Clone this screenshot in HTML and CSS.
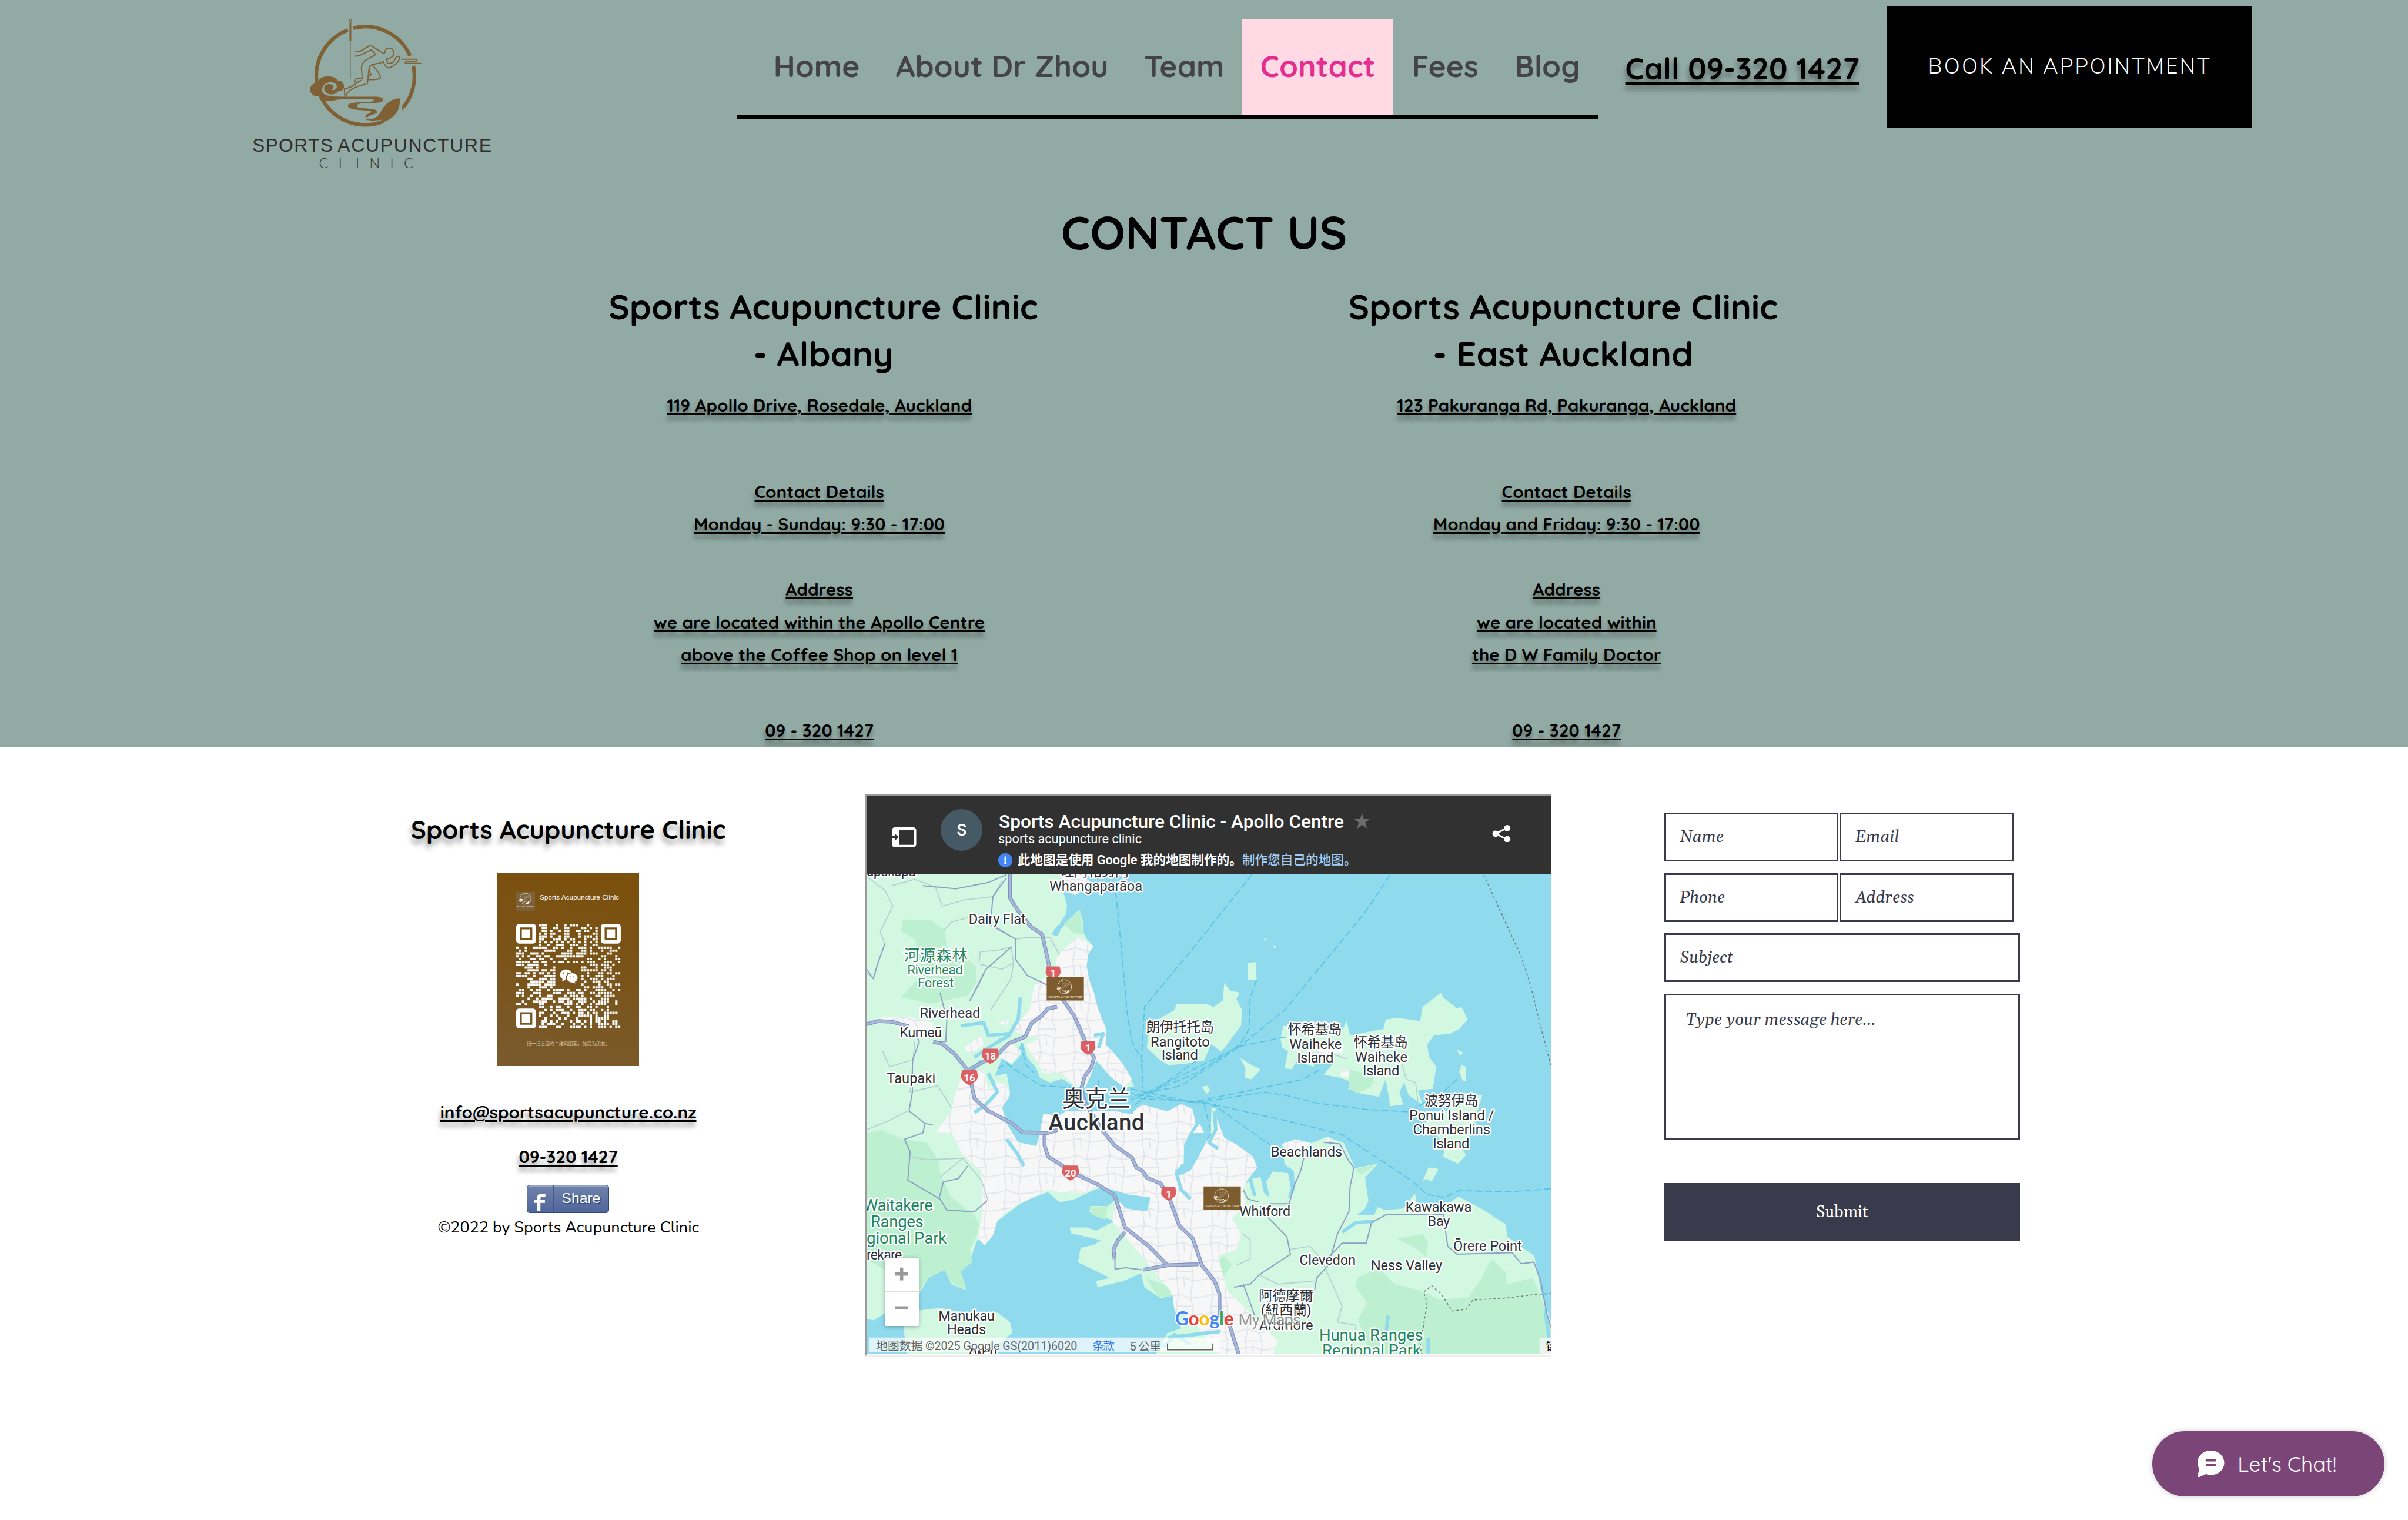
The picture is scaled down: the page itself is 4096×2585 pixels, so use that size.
FILE: index.html
```html
<!DOCTYPE html>
<html lang="en">
<head>
<meta charset="utf-8">
<title>Contact | Sports Acupuncture Clinic</title>
<link rel="stylesheet" href="styles.css">
</head>
<body>
<svg class="defs" width="0" height="0" aria-hidden="true">
  <symbol id="emblem" viewBox="400 90 580 570">
    <g fill="none" stroke="currentColor" stroke-width="19">
      <path d="M625 145A253 253 0 0 1 918 288M935 340A253 253 0 0 1 884 553M780 627A253 253 0 0 1 434 391A253 253 0 0 1 597 155"/>
    </g>
    <path fill="currentColor" d="M880 540L894 546L874 575ZM866 508C805 510 780 555 762 585C748 610 720 618 686 616C715 626 750 622 775 618L745 640C840 622 868 570 866 508Z"/>
    <path fill="currentColor" d="M448 494C425 503 402 485 402 462C402 440 420 428 440 428C450 400 475 393 497 394C520 394 540 405 546 417C565 415 577 430 577 446C577 462 565 473 546 471C538 484 520 489 508 487C485 485 474 468 474 455C476 435 500 430 515 438C528 446 525 462 511 464C530 468 541 456 540 443C535 424 505 420 485 430C465 440 460 462 467 478C478 496 520 499 560 499H720C745 499 778 498 780 515C780 534 730 531 665 534C640 537 637 550 655 556C700 562 745 560 750 576C748 592 705 592 695 609C684 606 688 592 700 588C722 580 725 575 700 571C650 566 600 566 597 546C598 528 650 527 700 527C735 526 740 514 720 513H560C535 514 525 522 497 522C470 522 458 505 448 494Z"/>
    <g fill="none" stroke="currentColor" stroke-width="6" stroke-linecap="round" stroke-linejoin="round">
      <circle cx="610" cy="103" r="5" stroke-width="3"/>
      <path stroke-width="9" stroke-linecap="butt" d="M610 110V212"/>
      <path stroke-width="3" d="M610 212V405"/>
      <path d="M638 265C670 274 690 236 718 236L785 278C788 256 800 246 812 248C835 250 838 275 829 290C822 300 815 294 806 306L795 301"/>
      <path d="M635 290C665 292 695 262 720 258L741 281C712 302 670 308 667 350L671 406L640 407L631 424"/>
      <path d="M664 415C635 428 620 455 579 457L581 497M590 492C595 462 640 448 686 435"/>
      <path d="M697 434C706 400 698 370 712 340C730 325 760 332 780 318C790 345 805 355 815 348C845 338 868 310 863 293C850 285 843 298 838 310C830 330 815 325 802 328L797 303"/>
      <path d="M725 338C745 358 765 380 765 402C755 412 735 412 710 411M708 350C705 370 712 376 718 385L710 390"/>
      <path stroke-linecap="butt" d="M873 306H952Q960 318 945 318H897Q887 327 900 327H976"/>
    </g>
  </symbol>
  <symbol id="shield" viewBox="0 0 30 29"><path fill="#dc5f62" d="M2 1H28Q30 8 30 14Q28 21 15 28Q2 21 0 14Q0 8 2 1Z"/></symbol>
</svg>

<div class="page">
  <section class="hero">
    <header class="header">
      <svg class="logo" viewBox="0 0 1500 960">
        <svg x="400" y="90" width="580" height="570" color="#7f6135"><use href="#emblem"/></svg>
        <text class="logo-name" x="103" y="783" textLength="416">SPORTS</text>
        <text class="logo-name" x="544" y="783" textLength="795">ACUPUNCTURE</text>
        <text class="logo-sub" x="448" y="868" textLength="486">CLINIC</text>
      </svg>
      <nav class="nav">
        <a class="nav-item home">Home</a>
        <a class="nav-item about">About Dr Zhou</a>
        <a class="nav-item team">Team</a>
        <a class="nav-item contact">Contact</a>
        <a class="nav-item fees">Fees</a>
        <a class="nav-item blog">Blog</a>
      </nav>
      <a class="call">Call 09-320 1427</a>
      <a class="book">BOOK AN APPOINTMENT</a>
    </header>
    <h1 class="title">CONTACT US</h1>
    <div class="clinics">
      <div class="clinic albany">
        <h2>Sports Acupuncture Clinic<br>- Albany</h2>
        <p class="addr">119 Apollo Drive, Rosedale, Auckland</p>
        <p>Contact Details</p>
        <p>Monday - Sunday: 9:30 - 17:00</p>
        <p class="where">Address</p>
        <p>we are located within the Apollo Centre</p>
        <p>above the Coffee Shop on level 1</p>
        <p class="phone">09 - 320 1427</p>
      </div>
      <div class="clinic east">
        <h2>Sports Acupuncture Clinic<br>- East Auckland</h2>
        <p class="addr">123 Pakuranga Rd, Pakuranga, Auckland</p>
        <p>Contact Details</p>
        <p>Monday and Friday: 9:30 - 17:00</p>
        <p class="where">Address</p>
        <p>we are located within</p>
        <p>the D W Family Doctor</p>
        <p class="phone">09 - 320 1427</p>
      </div>
    </div>
  </section>

  <section class="lower">
    <div class="about-col">
      <h3>Sports Acupuncture Clinic</h3>
      <div class="qr-card">
        <div class="qr-head">
          <div class="qr-logo"><svg viewBox="400 90 580 570"><use href="#emblem" x="400" y="90" width="580" height="570"/></svg><small>ORTS ACUPUNCT</small></div>
          <span>Sports Acupuncture Clinic</span>
        </div>
        <svg class="qr" viewBox="0 0 37 37">
          <g fill="none" stroke="#fff" stroke-width="1.3">
            <rect x=".65" y=".65" width="5.7" height="5.7" rx=".4"/><rect x="30.65" y=".65" width="5.7" height="5.7" rx=".4"/><rect x=".65" y="30.65" width="5.7" height="5.7" rx=".4"/>
          </g>
          <path fill="#fff" d="M2 2h3v3h-3zM32 2h3v3h-3zM2 32h3v3h-3z"/>
          <path fill="none" stroke="#fff" stroke-width=".84" stroke-dasharray=".84 .16" d="M8 .5h3M14 .5h1M17 .5h1M19 .5h3M25 .5h1
M9 1.5h2M13 1.5h2M17 1.5h2M23 1.5h2M26 1.5h1M28 1.5h1
M9 2.5h2M12 2.5h1M15 2.5h1M17 2.5h2M21 2.5h2M24 2.5h2M28 2.5h1
M8 3.5h1M10 3.5h1M12 3.5h2M17 3.5h2M22 3.5h1M27 3.5h2
M8 4.5h3M12 4.5h1M15 4.5h1M17 4.5h2M22 4.5h1M24 4.5h3M28 4.5h1
M8 5.5h2M13 5.5h3M17 5.5h1M19 5.5h2M24 5.5h1M27 5.5h2
M8 6.5h1M10 6.5h1M12 6.5h1M14 6.5h1M16 6.5h1M18 6.5h1M20 6.5h1M22 6.5h1M24 6.5h1M26 6.5h1M28 6.5h1
M8 7.5h1M11 7.5h1M14 7.5h3M19 7.5h3M24 7.5h1M27 7.5h2
M0 8.5h1M3 8.5h1M6 8.5h5M13 8.5h2M16 8.5h1M19 8.5h1M22 8.5h3M26 8.5h1M29 8.5h5M36 8.5h1
M1 9.5h1M3 9.5h1M10 9.5h4M18 9.5h2M23 9.5h2M26 9.5h1M30 9.5h1M33 9.5h3
M0 10.5h3M5 10.5h3M9 10.5h1M16 10.5h4M21 10.5h4M26 10.5h3M32 10.5h2
M0 11.5h1M2 11.5h1M4 11.5h1M7 11.5h2M10 11.5h2M14 11.5h10M30 11.5h2M35 11.5h1
M1 12.5h1M5 12.5h2M8 12.5h2M12 12.5h1M17 12.5h1M25 12.5h2M29 12.5h1M31 12.5h1M35 12.5h2
M0 13.5h5M6 13.5h2M9 13.5h2M13 13.5h1M15 13.5h2M18 13.5h1M20 13.5h2M23 13.5h1M25 13.5h3M31 13.5h3M36 13.5h1
M0 14.5h3M4 14.5h4M10 14.5h1M26 14.5h3M30 14.5h3M34 14.5h1
M3 15.5h3M7 15.5h1M13 15.5h1M23 15.5h2M28 15.5h1M31 15.5h3
M4 16.5h4M9 16.5h2M12 16.5h2M23 16.5h6M30 16.5h2M33 16.5h1
M0 17.5h2M3 17.5h2M6 17.5h1M8 17.5h2M11 17.5h1M13 17.5h1M25 17.5h1M29 17.5h2M32 17.5h2M35 17.5h2
M0 18.5h4M6 18.5h1M10 18.5h4M23 18.5h1M25 18.5h1M28 18.5h3M34 18.5h1
M4 19.5h2M8 19.5h3M12 19.5h2M23 19.5h1M26 19.5h3M30 19.5h1M32 19.5h3
M5 20.5h5M11 20.5h3M24 20.5h1M27 20.5h3M31 20.5h2
M0 21.5h1M4 21.5h5M10 21.5h4M23 21.5h1M29 21.5h1M32 21.5h2M35 21.5h2
M4 22.5h1M8 22.5h3M12 22.5h1M24 22.5h2M27 22.5h4M33 22.5h1
M1 23.5h2M5 23.5h1M7 23.5h2M11 23.5h1M13 23.5h4M18 23.5h1M21 23.5h2M24 23.5h1M28 23.5h4M34 23.5h1M36 23.5h1
M0 24.5h3M6 24.5h3M13 24.5h3M18 24.5h3M22 24.5h2M26 24.5h2M29 24.5h5
M0 25.5h1M2 25.5h1M5 25.5h1M8 25.5h1M11 25.5h2M17 25.5h1M19 25.5h3M23 25.5h1M28 25.5h2M31 25.5h4
M4 26.5h1M7 26.5h1M9 26.5h4M15 26.5h4M20 26.5h5M26 26.5h1M30 26.5h3
M2 27.5h1M6 27.5h5M13 27.5h1M15 27.5h2M18 27.5h2M22 27.5h3M27 27.5h1M29 27.5h4M35 27.5h1
M0 28.5h2M3 28.5h1M8 28.5h2M17 28.5h3M21 28.5h1M23 28.5h1M26 28.5h1M28 28.5h4M35 28.5h1
M8 29.5h2M12 29.5h1M14 29.5h2M18 29.5h1M21 29.5h2M25 29.5h2M28 29.5h1M32 29.5h1
M10 30.5h1M12 30.5h1M14 30.5h3M19 30.5h1M22 30.5h3M26 30.5h2M30 30.5h1M32 30.5h1
M8 31.5h2M13 31.5h1M16 31.5h3M20 31.5h1M22 31.5h2M25 31.5h1M27 31.5h2M31 31.5h5
M8 32.5h1M12 32.5h1M14 32.5h1M18 32.5h1M22 32.5h5M28 32.5h1M31 32.5h2
M10 33.5h1M15 33.5h1M17 33.5h1M21 33.5h1M26 33.5h1M28 33.5h5
M9 34.5h2M12 34.5h1M14 34.5h1M19 34.5h1M21 34.5h2M24 34.5h1M26 34.5h1M28 34.5h2M31 34.5h1M34 34.5h2
M9 35.5h1M11 35.5h3M16 35.5h1M20 35.5h1M23 35.5h1M26 35.5h1M29 35.5h4M34 35.5h2
M8 36.5h3M14 36.5h2M19 36.5h4M24 36.5h1M26 36.5h1M29 36.5h3M33 36.5h1M35 36.5h2"/>
          <g fill="#fff"><ellipse cx="17.6" cy="18" rx="2.1" ry="1.9"/><path d="M16.5 19.2L16.2 20.4L18 19.6Z"/><ellipse cx="19.8" cy="19.1" rx="2.1" ry="1.8" stroke="#7b5620" stroke-width=".3"/><path d="M20.5 20.3L21 21.1L19.6 20.7Z"/></g>
          <g fill="#7b5620"><circle cx="16.8" cy="17.4" r=".25"/><circle cx="18.3" cy="17.4" r=".25"/><circle cx="19.1" cy="18.8" r=".22"/><circle cx="20.4" cy="18.8" r=".22"/></g>
        </svg>
        <div class="qr-note">扫一扫上面的二维码图案，加我为朋友。</div>
      </div>
      <p class="email">info@sportsacupuncture.co.nz</p>
      <p class="tel">09-320 1427</p>
      <div class="share">
        <div class="share-f"><svg viewBox="0 0 22 34"><path fill="#fff" d="M5 34V18H0V12H5V9Q5 0 14 0H22V6H16Q12 6 12 10V12H21V18H12V34Z"/></svg></div>
        <div class="share-t">Share</div>
      </div>
      <p class="copy">©2022 by Sports Acupuncture Clinic</p>
    </div>

    <div class="mapframe">
      <div class="map-head">
        <svg class="panel-ico" viewBox="0 0 42 34"><rect x="2" y="2" width="38" height="30" rx="3" fill="none" stroke="#fff" stroke-width="4"/><path fill="#fff" d="M2 2H13V32H2Z"/><path fill="#303130" d="M0 15H5V11L12 17L5 23V19H0Z"/></svg>
        <div class="avatar">S</div>
        <div class="map-meta">
          <div class="map-title">Sports Acupuncture Clinic - Apollo Centre<svg class="star" viewBox="0 0 30 29"><path fill="#6b6c6b" d="M15 0L18.500 10.500H30L21 17L24.300 28.500L15 21.500L5.700 28.500L9 17L0 10.500H11.500Z"/></svg></div>
          <div class="map-owner">sports acupuncture clinic</div>
          <div class="map-note"><i class="info">i</i><span>此地图是使用 Google 我的地图制作的。</span><a>制作您自己的地图。</a></div>
        </div>
        <svg class="share-ico" viewBox="0 0 32 30"><path d="M26 5L6 15L26 25" fill="none" stroke="#fff" stroke-width="3"/><g fill="#fff"><circle cx="26" cy="5.500" r="5.500"/><circle cx="6" cy="15" r="5.500"/><circle cx="26" cy="24.500" r="5.500"/></g></svg>
      </div>
      <div class="map">
        <svg class="terrain" viewBox="30.3 7.4 2979.3 1523.7" preserveAspectRatio="none">
          <defs>
            <pattern id="streets" width="150" height="110" patternUnits="userSpaceOnUse">
              <rect width="150" height="110" fill="#f7f7f7"/>
              <path class="street" d="M0 30L40 22L90 34L150 30M0 85L60 78L100 90L150 85M35 0L40 22L28 60L35 110M95 0L90 34L102 60L100 90L95 110M28 60L102 60M60 78L65 110"/>
            </pattern>
          </defs>
          <rect x="30" y="7" width="2980" height="1525" fill="#90daee"/>
          <g class="land">
            <path d="M30 7H890L885 60L903 110L898 135L872 165L852 180L835 200L862 205L880 178L930 140L955 122L970 150L975 195L990 215L1018 237L995 262L988 300L1000 345L1020 385L1035 430L1075 505L1070 550L1100 570L1150 615L1195 682L1150 685L1090 650L1060 625L1030 600L1010 640L980 690L940 685L880 658L830 670L785 655L770 625L730 590L712 545L690 560L705 580L660 615L605 565L620 590L590 650L640 640L655 700L620 750L640 800L690 860L770 872L782 840L800 770L870 775L900 760L1100 760L1180 768L1230 740L1340 762L1400 738L1450 755L1462 800L1430 840L1412 870L1410 930L1370 950L1395 965L1440 950L1480 900L1490 885L1527 850L1532 750L1548 750L1557 790L1587 845L1647 870L1712 905L1730 940L1700 970L1667 1000L1707 975L1745 970L1760 1020L1785 1035L1770 985L1800 952L1865 958L1877 1005L1862 1040L1895 1010L1890 950L1850 930L1839 865L1897 850L1967 862L2035 842L2107 862L2157 942L2257 927L2200 972L2215 1045L2200 1070L2167 1090L2240 1090L2255 1065L2287 1075L2367 1070L2417 1022L2427 1060L2570 1050L2607 1032L2717 1075L2812 1120L2820 1160L2937 1220L2950 1270L2967 1340L3010 1430V1532H1290L1340 1465L1400 1450L1370 1390L1362 1345L1310 1355L1240 1320L1225 1275L1150 1300L1035 1320L1030 1300L1090 1290L950 1240L962 1195L1020 1185L1050 1170L920 1148L915 1130L990 1130L1030 1140L1110 1110L1000 1080L1005 1062L1080 1062L1120 1040L1160 1075L1250 1080L1265 1035L1170 1025L1060 1003L1030 1008L930 1042L870 1050L820 1018L740 1040L690 1060L600 1110L580 1155L545 1188L515 1165L485 1225L440 1270L467 1330L400 1310L370 1265L300 1290L260 1340L150 1385L60 1425L30 1420Z"/>
            <path d="M190 1440L240 1395L350 1385L450 1400L600 1400L655 1430L665 1465L600 1500L585 1532H205Z"/>
            <path d="M1310 600L1250 560L1260 500L1300 470L1370 440L1380 420L1510 420L1540 430L1580 410L1588 352L1612 378L1655 385L1640 405L1665 440L1660 490L1575 572L1530 548L1500 600L1420 610L1345 615ZM1690 290L1725 288L1728 345L1688 345ZM1655 590L1700 612L1745 628L1705 660L1677 655L1680 625Z"/>
            <path d="M1832 530L1845 490L2100 505L2120 475L2135 520L2280 500L2290 470L2345 465L2440 475L2450 430L2530 385L2540 400L2600 435L2620 430L2647 470L2610 500L2570 515L2500 520L2470 550L2480 590L2510 620L2495 690L2430 695L2450 740L2390 710L2370 670L2350 700L2365 740L2310 745L2290 660L2260 715L2180 705L2125 690L2150 670L2090 655L2020 645L2060 610L2000 590L1975 620L1905 600L1880 628L1850 625L1865 570L1840 560Z"/>
            <path d="M2610 700L2660 705L2710 710L2690 760L2665 830L2620 880L2640 900L2605 928L2540 905L2550 870L2500 830L2460 800L2490 770L2560 760ZM2500 940L2520 945L2490 985L2465 975L2450 985L2475 940ZM2620 615L2640 620L2640 665L2625 665L2610 635ZM2600 565L2628 575L2612 585ZM1490 683L1515 680L1525 695L1510 706ZM1760 212L1772 215L1765 222ZM1797 234L1815 237L1805 245Z"/>
          </g>
          <g class="park">
            <path d="M190 152L310 155L370 185L380 240L440 260L505 300L510 350L470 395L400 405L310 420L180 400L250 345L265 290L240 215L178 190Z"/>
            <path d="M30 830L95 820L190 850L290 860L345 920L350 960L400 1035L500 1090L520 1120L510 1160L480 1200L490 1240L440 1270L465 1330L400 1305L370 1265L300 1290L260 1330L30 1230Z"/>
            <path d="M890 165L960 122L972 200L930 195ZM2130 630L2240 645L2230 680L2170 705L2130 690ZM2165 1290L2260 1260L2330 1310L2440 1330L2530 1360L2650 1350L2700 1300L2750 1230L2810 1270L2820 1310L2930 1290L2960 1340L3010 1440V1532H2220L2170 1420L2210 1370L2160 1320ZM2340 1165L2450 1150L2475 1175L2465 1225L2430 1200ZM1500 1090L1580 1100L1580 1135L1550 1130ZM1550 1240L1590 1220L1620 1250L1580 1290L1540 1310ZM1245 1290L1350 1320L1355 1350L1300 1350Z"/>
            <path d="M1110 885L1140 895L1120 930L1105 925ZM1270 850L1300 840L1290 875L1270 870ZM845 570L875 562L880 580L850 588ZM580 935L620 925L615 955ZM1515 930L1540 925L1540 965L1520 950ZM2160 945L2255 927L2180 965ZM1000 1065L1080 1062L1070 1105L1010 1090ZM1320 1140L1350 1145L1340 1165Z"/>
          </g>
          <g class="urban">
            <path d="M880 255L905 235L955 207L1018 237L995 262L988 300L1000 345L1020 385L1035 430L1075 505L1070 550L1100 570L1150 615L1185 660L1150 685L1090 650L1060 620L1030 600L1010 640L980 690L940 680L880 640L800 640L770 600L720 550L790 530L720 520L670 505L690 480L740 440L760 360L800 340L850 330L860 270Z"/>
            <path d="M415 710L450 640L540 630L560 690L590 670L640 675L655 710L620 750L640 800L690 860L770 872L782 840L800 770L870 775L900 760L1100 760L1180 768L1230 740L1340 762L1400 738L1450 755L1462 800L1430 840L1412 870L1410 930L1370 950L1395 965L1440 950L1480 900L1490 885L1557 790L1587 845L1647 870L1712 905L1730 940L1690 975L1667 1010L1680 1060L1620 1100L1660 1150L1640 1200L1560 1220L1600 1330L1740 1430L1820 1490L1800 1532H1560L1480 1450L1400 1400L1370 1390L1362 1340L1250 1240L1180 1180L1100 1110L1120 1040L1160 1070L1260 1080L1265 1035L1170 1025L1060 1000L1030 1000L980 1020L890 1020L820 1010L740 1040L690 1055L600 1105L580 1155L545 1185L515 1165L535 1080L530 950L450 900L400 830L330 830L400 760Z"/>
            <path d="M600 480L650 470L640 490ZM650 545L705 570L660 610L610 590ZM455 560L530 520L540 550L480 580ZM1450 830L1480 800L1500 830ZM1839 865L1897 850L1960 862L1940 880L1870 885ZM2027 860L2040 842L2060 860ZM880 7L890 60L940 75L985 50L1000 30L960 7ZM1960 560L1990 545L2110 550L2100 575L2000 580ZM2095 630L2135 632L2130 655L2095 650ZM70 465L200 460L320 480L310 520L200 500Z"/>
          </g>
          <g class="inlet">
            <path d="M700 400L690 470L650 520L560 560L500 590M650 515L560 520L540 480L440 490M530 600L480 640M560 640L600 700L550 740L500 765M655 520L600 540M640 850L690 900L715 935M1410 930L1380 960L1400 1010L1440 1040M1700 975L1720 1030M1190 765L1140 760M1560 880L1520 860L1550 820L1545 760M2240 1110L2160 1115L2100 1145M3010 1340L2985 1400L3000 1480M2300 1410L2290 1480M2475 1480L2475 1532M1290 1510L1340 1500L1370 1470L1440 1500M1340 1480L1570 1460M1020 520L1060 515L1040 560"/>
          </g>
          <g class="minor">
            <path d="M30 320L60 340L90 270L110 230L90 190L145 110L110 60L30 15M140 45L240 25L330 50L360 110L460 90L580 80L620 30M370 185L400 160L510 140L570 165L680 215L720 210L830 210L870 265M520 290L525 255L600 250L660 240L670 290L620 310L525 295M550 310L520 360L480 410M670 290L660 340L570 440M100 570L130 620L220 600M240 540L220 700L340 680L400 750M210 760L130 790L30 820M350 970L450 910L530 980L560 1045M220 905L290 915L460 910M1667 1150L1700 1170L1700 1230L1640 1250M1870 1200L1960 1190L2010 1230L2100 1380L2080 1430L2160 1440L2155 1480M1740 1280L1820 1310L1980 1300M2360 610L2380 660L2420 670L2430 730M2060 580L2120 595"/>
          </g>
          <g class="roads">
            <path d="M275 45L420 55L560 35L640 10M640 20L580 80L570 170L680 215L680 280L730 330L815 360M350 385L380 470L375 540L330 540M550 310L660 240M480 410L550 310M230 500L260 540L230 600L230 700L215 760L285 800L320 805M285 800L275 830L195 850L220 890L210 980L350 1040L380 1075L500 1080L555 1045M345 1040L365 985L430 975L470 935M1940 890L1920 950L1890 1000L1870 1055L1790 1055L1780 1100L1860 1160L1875 1215L1740 1280L1700 1310L1630 1320M1670 1010L1690 1040L1740 1050M2020 860L2090 865L2130 920L2152 940L2135 1000L2130 1080L2080 1150L2040 1250L1990 1290L1980 1330M2040 1225L2100 1180L2205 1180L2228 1115L2290 1090L2540 1090L2560 1190L2600 1215L2840 1210L2880 1245L2935 1240L2965 1300L2990 1400L3010 1450M1110 1200L1112 1262L1160 1258L1230 1265M1670 1310L1720 1410M30 310L60 340L80 290L110 230"/>
          </g>
          <g class="motor-edge"><path id="mway" d="M655 7V85L690 125L745 175L795 200L825 300L850 370L935 460L995 560L1020 590L1010 620L980 650L965 690L985 740L1060 825L1110 870L1185 908L1205 940L1230 950L1250 972L1310 990L1350 1040L1392 1125L1450 1165L1490 1250L1545 1300L1566 1340L1567 1405L1610 1440L1650 1532M860 430L820 435L790 460L750 480L720 525L650 545L600 580L475 630M30 485L80 475L140 477L215 492M320 540L360 548L412 578L475 635L500 720L560 760L660 798L710 828L820 830L862 820M805 838V870L820 905L870 928L925 955L1040 995L1110 1028L1155 1130L1260 1190L1340 1250L1475 1247M1155 1145L1125 1170L1105 1200L1110 1230M1340 1250L1235 1264"/></g>
          <use href="#mway" class="motor"/>
          <g class="ferry">
            <path d="M1115 65L1140 250L1165 450L1185 540L1230 600V690M1707 10L1467 230L1240 430L1225 620M2310 10L2200 130L1850 440L1655 555L1200 720M1728 345L1700 400L1695 500L1655 550L1467 640L1180 725M1855 525L1655 555L1400 680L1180 715M2000 630L1930 660L1467 730L1200 720M2600 660L2540 700L2390 763L2200 755L1990 735L1850 710L1760 700L1467 735L1180 705M3010 1007L2830 1017L2610 1013L2545 1035L2470 1025L2400 980L2100 835L1850 790L1467 728M1800 875L1550 745L1467 730M1500 740L1530 830L1510 855M600 625L640 610L700 640L790 680L900 685L1040 690M705 545L720 610L760 640M1180 690L1467 735M1200 740L1467 600M1040 660V700"/>
          </g>
          <path class="bound" d="M2717 12L2880 270L2920 360L2960 480L3010 620M3010 1340L2950 1342L2800 1355L2670 1360L2640 1390L2580 1395L2530 1340L2490 1315L2455 1335L2470 1370L2455 1440L2440 1500L2445 1532" fill="none"/>
        </svg>
        <svg class="labels" viewBox="0 0 1178 826">
          <g class="lb">
            <text x="0" y="3.600" textLength="85">apukapu</text><text x="334" y="4.500" textLength="118">旺阿帕劳阿</text>
            <text x="314.600" y="29" textLength="160">Whangaparāoa</text><text x="175.800" y="86" textLength="98">Dairy Flat</text>
            <text x="91.600" y="247.500" textLength="104">Riverhead</text><text x="56.800" y="281.700" textLength="73">Kumeū</text><text x="34.700" y="359.700" textLength="84">Taupaki</text>
            <text x="0" y="664" textLength="61">rekare</text><text x="123.600" y="768.500" textLength="97">Manukau</text><text x="138.600" y="792" textLength="67">Heads</text>
            <text x="481" y="272" textLength="117">朗伊托托岛</text><text x="488.600" y="297" textLength="102">Rangitoto</text><text x="507.600" y="320" textLength="63">Island</text>
            <text x="725" y="275.700" textLength="93">怀希基岛</text><text x="727.700" y="301" textLength="90">Waiheke</text><text x="740.800" y="325" textLength="63">Island</text>
            <text x="838.500" y="298" textLength="93">怀希基岛</text><text x="840.800" y="323.400" textLength="90">Waiheke</text><text x="853.900" y="347" textLength="63">Island</text>
            <text x="959.900" y="398.800" textLength="93">波努伊岛</text><text x="933.800" y="424" textLength="146">Ponui Island /</text><text x="940.500" y="448" textLength="133">Chamberlins</text><text x="974.500" y="472.500" textLength="63">Island</text>
            <text x="695.700" y="487" textLength="123">Beachlands</text><text x="641.500" y="588.500" textLength="88">Whitford</text><text x="927.400" y="582" textLength="114">Kawakawa</text><text x="965.800" y="606" textLength="38">Bay</text>
            <text x="1009.700" y="649" textLength="118">Ōrere Point</text><text x="744.800" y="673" textLength="97">Clevedon</text><text x="867.700" y="682" textLength="123">Ness Valley</text>
            <text x="674.800" y="735" textLength="94">阿德摩爾</text><text x="678.700" y="759" textLength="87">(紐西蘭)</text><text x="675.600" y="785" textLength="93">Ardmore</text>
            <g class="city"><text class="zh" x="337" y="401" textLength="117">奥克兰</text><text x="313" y="441" textLength="165">Auckland</text></g>
            <g class="green">
              <text class="cj" x="64" y="149.500" textLength="110">河源森林</text><text x="70" y="173" textLength="96">Riverhead</text><text x="88" y="195" textLength="62">Forest</text>
              <g class="big"><text x="-5" y="580" textLength="119">Waitakere</text><text x="7" y="608" textLength="91">Ranges</text><text x="0" y="636" textLength="138">gional Park</text><text x="779" y="803" textLength="179">Hunua Ranges</text><text x="784" y="830" textLength="170">Regional Park</text></g>
            </g>
          </g>
          <g class="shields">
            <use href="#shield" x="308" y="157" width="26" height="28"/><text x="321" y="177">1</text>
            <use href="#shield" x="368" y="286" width="26" height="28"/><text x="381" y="306">1</text>
            <use href="#shield" x="507" y="537" width="26" height="28"/><text x="520" y="557">1</text>
            <use href="#shield" x="198" y="300" width="30" height="28"/><text x="213" y="320">18</text>
            <use href="#shield" x="162" y="337" width="30" height="28"/><text x="177" y="357">16</text>
            <use href="#shield" x="336" y="501" width="30" height="28"/><text x="351" y="521">20</text>
          </g>
          <g class="marker" transform="translate(310 178)"><rect width="64" height="40" fill="#7c5b2e"/><use href="#emblem" x="17" y="2" width="28" height="27"/><text x="3" y="36" textLength="59">SPORTS ACUPUNCTURE</text></g>
          <g class="marker" transform="translate(580 538)"><rect width="64" height="40" fill="#7c5b2e"/><use href="#emblem" x="17" y="2" width="28" height="27"/><text x="3" y="36" textLength="59">SPORTS ACUPUNCTURE</text></g>
          <rect x="4" y="798" width="605" height="25" fill="#fff" opacity=".7"/>
          <rect x="1158" y="798" width="20" height="28" fill="#f5f5f5" opacity=".8"/>
          <text class="lb-cut" x="174" y="833" textLength="51">Awhitu</text>
          <g class="attr"><text x="16.500" y="820" textLength="346">地图数据 ©2025 Google GS(2011)6020</text><text x="389" y="820" textLength="38" fill="#3b7de9">条款</text><text x="453" y="821" textLength="54">5 公里</text><path d="M518 808V819H596V808" fill="none" stroke="#666" stroke-width="2"/><text x="1169" y="821" fill="#000">键</text></g>
          <text class="google" x="531" y="777" textLength="101"><tspan fill="#4285f4">G</tspan><tspan fill="#ea4335">o</tspan><tspan fill="#fbbc05">o</tspan><tspan fill="#4285f4">g</tspan><tspan fill="#34a853">l</tspan><tspan fill="#ea4335">e</tspan></text>
          <text class="mymaps" x="640" y="777" textLength="108">My Maps</text>
        </svg>
        <div class="zoomer">
          <svg viewBox="0 0 58 58"><path d="M18 28H40M29 17V39"/></svg>
          <svg viewBox="0 0 58 58"><path d="M18 28H40"/></svg>
        </div>
      </div>
    </div>

    <form class="form">
      <div class="pair"><div class="field half">Name</div><div class="field half">Email</div></div>
      <div class="pair"><div class="field half">Phone</div><div class="field half">Address</div></div>
      <div class="field">Subject</div>
      <div class="field message">Type your message here...</div>
      <div class="submit">Submit</div>
    </form>
  </section>

  <div class="chat">
    <svg viewBox="0 0 46 46"><path fill="#fff" d="M23 0C36 0 46 9 46 21S36 42 23 42Q18 42 14 40.500L3 45.600Q0 46.500 0 43.500L3 32Q0 27 0 21C0 9 10 0 23 0Z"/><path d="M15.500 17H30.500M15.500 25H30.500" stroke="#7b4577" stroke-width="3.600" stroke-linecap="round"/></svg>
    <span>Let's Chat!</span>
  </div>
</div>
</body>
</html>
```
FILE: styles.css
```css
* { box-sizing: border-box; margin: 0; padding: 0; }
html, body { overflow: hidden; }
body { background: #fff; }
.defs { position: absolute; }
.page {
  position: relative;
  zoom: 0.988417;
  width: 4144px;
  height: 2615px;
  overflow: hidden;
  font-family: Quicksand, Lato, "Noto Sans CJK SC", sans-serif;
  color: #000;
}
.hero { height: 1286px; background: #91aba4; overflow: hidden; }
.header { display: flex; align-items: flex-start; height: 350px; padding-left: 400px; }
.logo { width: 500px; height: 320px; }
.logo-name { font: 97px "Liberation Sans", sans-serif; fill: #332e2d; }
.logo-sub { font: 300 71px Lato, sans-serif; fill: #332e2d; }
.nav { display: flex; margin: 32px 0 0 368px; padding-left: 32px; width: 1482px; height: 172px; border-bottom: 8px solid #000; }
.nav-item { display: flex; justify-content: center; align-items: center; font-size: 52px; font-weight: 700; color: #444; line-height: 60px; white-space: nowrap; }
.home { width: 211px; }
.about { width: 427px; }
.team { width: 200px; }
.contact { width: 260px; background: #ffd9e4; color: #e62e8f; }
.fees { width: 178px; }
.blog { width: 174px; }
.call { margin: 88px 0 0 47px; width: 404px; font-size: 52px; line-height: 60px; font-weight: 700; text-decoration: underline; text-decoration-thickness: 5px; text-underline-offset: 4px; text-decoration-skip-ink: none; text-shadow: -1px 8px 10px rgba(0, 0, 0, .4); white-space: nowrap; }
.book { display: flex; align-items: center; justify-content: center; margin: 10px 0 0 47px; width: 628px; height: 210px; background: #000; color: #fff; font: 300 36px "Nunito Sans", Lato, sans-serif; letter-spacing: 3.300px; white-space: nowrap; }
.title { height: 137px; text-align: center; font-size: 80px; line-height: 100px; }
.clinics { display: flex; gap: 526px; padding-left: 1030px; }
.clinic { width: 760px; text-align: center; }
.clinic h2 { font-size: 60px; line-height: 81px; white-space: nowrap; }
.albany h2 { padding-left: 14px; }
.east h2 { padding-right: 12px; }
.clinic p { font-size: 30px; font-weight: 700; line-height: 56.300px; text-decoration: underline; text-decoration-thickness: 3px; text-underline-offset: 3px; text-shadow: -1px 8px 8px rgba(0, 0, 0, .4); white-space: nowrap; }
.clinic .addr { margin: 20px 0 91.700px; }
.clinic .where { margin-top: 56px; }
.clinic .phone { margin-top: 73.400px; }

.lower { display: flex; align-items: flex-start; }
.about-col { display: flex; flex-direction: column; align-items: center; width: 640px; margin: 112.600px 0 0 658px; white-space: nowrap; }
.about-col h3 { font-size: 44px; line-height: 60px; text-shadow: -2px 8px 10px rgba(0, 0, 0, .4); }
.qr-card { display: flex; flex-direction: column; align-items: center; width: 244px; height: 332px; margin-top: 43.400px; background: linear-gradient(190deg, #7c500c, #7a5318 45%, #7a5b2e); color: #fff; }
.qr-head { display: flex; width: 180px; height: 33px; margin-top: 33px; font: 500 11.500px "Liberation Sans", sans-serif; line-height: 20px; letter-spacing: .2px; }
.qr-logo { display: flex; flex-direction: column; align-items: center; width: 33px; height: 33px; margin-right: 8px; background: #7c6138; overflow: hidden; }
.qr-logo svg { width: 22px; height: 22px; }
.qr-logo small { font-size: 4px; line-height: 6px; letter-spacing: 0; }
.qr { width: 180px; height: 180px; margin-top: 21px; }
.qr-note { margin-top: 22px; font-size: 8px; line-height: 12px; color: #d6c6a8; }
.email, .tel { font-size: 30px; font-weight: 700; line-height: 40px; text-decoration: underline; text-decoration-thickness: 3px; text-underline-offset: 3px; text-shadow: -2px 8px 8px rgba(0, 0, 0, .4); }
.email { margin-top: 59px; }
.tel { margin-top: 36.500px; }
.share { display: flex; width: 142px; height: 48px; margin: 29.500px 2px 0 0; border: 2px solid #2c4a75; border-radius: 5px; background: linear-gradient(#7083ab, #50659b); box-shadow: inset 0 2px 0 #93a3c6; }
.share-f { display: flex; justify-content: center; align-items: flex-end; width: 46px; border-right: 2px solid #3f5a8d; }
.share-f svg { width: 19px; height: 34px; }
.share-t { flex: 1; text-align: center; font: 25px/44px "Liberation Sans", sans-serif; color: #fff; text-shadow: 2px 2px 1px #33487a; }
.copy { margin-top: 5.500px; font: 27.300px/40px "Nunito Sans", Lato, sans-serif; }

.mapframe { width: 1182px; height: 968px; margin: 80px 0 0 190px; border: 4px solid #eee; border-top-color: #9a9a9a; border-left-color: #9a9a9a; border-right: 0; font-family: Roboto, "Noto Sans CJK SC", sans-serif; }
.map-head { display: flex; height: 134px; background: #303130; color: #fff; white-space: nowrap; }
.panel-ico { width: 42px; height: 34px; margin: 54px 0 0 44px; }
.avatar { width: 72px; height: 72px; margin: 23px 0 0 42px; border-radius: 50%; background: #455a65; font-size: 28px; font-weight: 500; line-height: 72px; text-align: center; }
.map-meta { margin: 27px auto 0 27px; }
.map-title { display: flex; padding-left: 1px; font-size: 32px; font-weight: 500; line-height: 36px; }
.star { width: 28px; height: 27px; margin: 3px 0 0 17px; }
.map-owner { margin-top: -1px; font-size: 22px; line-height: 26px; }
.map-note { display: flex; align-items: center; margin-top: 8px; font-size: 22px; line-height: 30px; font-weight: 700; letter-spacing: -.1px; }
.map-note a { color: #a0ccf5; font-weight: 500; }
.info { width: 24px; height: 24px; margin-right: 9px; border-radius: 50%; background: #4285f4; font: 700 19px/24px "Liberation Serif", serif; text-align: center; }
.share-ico { width: 32px; height: 30px; margin: 50px 70px 0 0; }
.map { position: relative; height: 826px; overflow: hidden; }
.terrain, .labels { position: absolute; left: 0; top: 0; width: 1178px; height: 826px; }
.land { fill: #d3f8e2; }
.park { fill: #bcf0d0; }
.urban { fill: url(#streets); }
.terrain path { vector-effect: non-scaling-stroke; }
.street { fill: none; stroke: #dbe1ea; stroke-width: 1.500px; }
.inlet { fill: none; stroke: #90daee; stroke-width: 6px; stroke-linejoin: round; }
.minor { fill: none; stroke: #b3cdd0; stroke-width: 1.700px; }
.roads { fill: none; stroke: #8c9fc4; stroke-width: 2px; }
.motor-edge { fill: none; stroke: #7f90c0; stroke-width: 6.500px; stroke-linejoin: round; }
.motor { fill: none; stroke: #a6b7d8; stroke-width: 4px; stroke-linejoin: round; }
.ferry { fill: none; stroke: #56c3e2; stroke-width: 1.800px; stroke-dasharray: 12 5; }
.bound { fill: none; stroke: #6d7a80; stroke-width: 1.600px; stroke-dasharray: 4 4; }
.labels text { font-size: 24px; }
.lb text, .labels .lb-cut { fill: #2d3136; stroke: #fff; stroke-width: 5px; stroke-linejoin: round; paint-order: stroke; }
.labels .city text { font-size: 39px; font-weight: 500; }
.labels .city .zh { font-weight: 400; }
.labels .green text { fill: #1e8a62; font-size: 23px; }
.labels .green .cj { font-size: 27px; }
.labels .green .big text { font-size: 28px; }
.labels .shields text { fill: #fff; font-size: 17px; font-weight: 700; text-anchor: middle; }
.marker { color: #efe6d4; fill: #efe6d4; }
.labels .marker text { font-size: 5.500px; }
.labels .attr text { font-size: 20px; }
.attr { fill: #666; }
.labels .google, .labels .mymaps { font-family: Lato, sans-serif; font-size: 32px; font-weight: 700; stroke: #fff; stroke-width: 3px; paint-order: stroke; }
.labels .mymaps { fill: #777; font-weight: 400; font-family: Roboto, sans-serif; font-size: 28px; opacity: .75; }
.zoomer { position: absolute; left: 32px; top: 661px; width: 58px; height: 117px; background: #fff; border-radius: 3px; box-shadow: 0 2px 8px rgba(0, 0, 0, .3); }
.zoomer svg { display: block; width: 58px; height: 58px; fill: none; stroke: #999; stroke-width: 5.500px; }
.zoomer svg + svg { border-top: 2px solid #ddd; }

.form { display: flex; flex-direction: column; gap: 20px; width: 612px; margin: 112px 0 0 194px; font-family: Gelasio, "Liberation Serif", serif; }
.pair { display: flex; gap: 2px; }
.field { height: 84px; padding-left: 24px; border: 4px solid #393b4d; color: #393b4d; font-size: 28px; font-style: italic; line-height: 79px; white-space: nowrap; }
.half { width: 300px; }
.message { height: 252px; padding: 0 0 0 34px; line-height: 84px; }
.submit { height: 100px; margin-top: 54px; background: #393b4d; color: #fff; font-size: 28px; line-height: 101px; text-align: center; }
.chat { position: absolute; left: 3704px; top: 2462.500px; display: flex; align-items: center; width: 400px; height: 112px; padding-left: 78px; border-radius: 56px; background: #7b4577; color: #fff; font-size: 36px; font-weight: 400; box-shadow: 0 0 10px rgba(0, 0, 0, .2); white-space: nowrap; }
.chat svg { width: 46px; height: 46px; margin-right: 23px; }
```
